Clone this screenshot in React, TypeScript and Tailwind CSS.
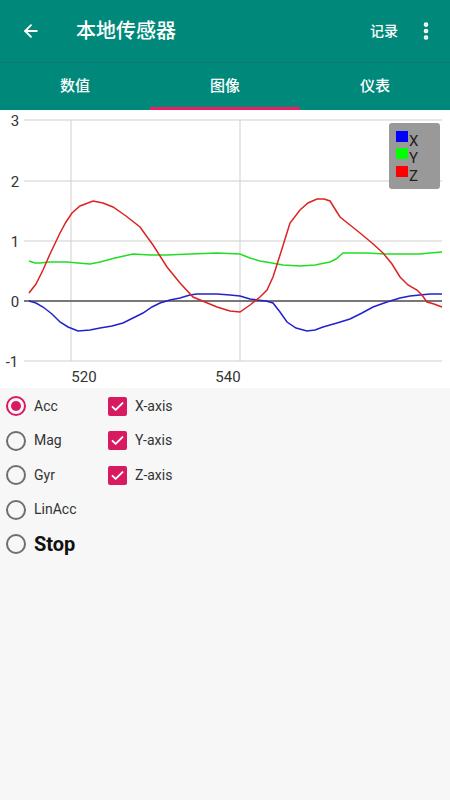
import { ArrowLeft, MoreVertical } from "lucide-react";

const font = { fontFamily: "Roboto, 'Noto Sans CJK SC', sans-serif" };

// chart area points (px inside a 450x278 box)
const shift = (pts: number[][]) =>
  pts.map(([x, y]) => `${x},${y - 110}`).join(" ");

const zLine = shift([
  [29, 293], [36, 284], [43, 270], [50, 254], [60, 233], [66, 222], [72, 213], [80, 206], [93, 201],
  [103, 203], [113, 207], [126, 216], [140, 227], [153, 245], [167, 267], [180, 283], [193, 297],
  [205, 302], [217, 307], [230, 311], [240, 312], [250, 305], [260, 297], [267, 290], [273, 277],
  [281, 252], [290, 223], [300, 210], [308, 203], [317, 199], [324, 199], [330, 201], [335, 209],
  [340, 217], [350, 225], [360, 233], [372, 243], [383, 253], [392, 264], [400, 277], [408, 285],
  [417, 290], [422, 295], [427, 302], [434, 304], [442, 307],
]);

const yLine = shift([
  [29, 261], [35, 263], [40, 263], [50, 262], [67, 262], [78, 263], [90, 264], [100, 262],
  [115, 258], [133, 254], [150, 255], [167, 255], [190, 254], [217, 253], [240, 254], [250, 258],
  [260, 261], [272, 263], [283, 265], [300, 266], [315, 265], [330, 262], [336, 259], [343, 253],
  [355, 253], [367, 253], [385, 254], [400, 254], [420, 254], [430, 253], [442, 252],
]);

const xLine = shift([
  [29, 301], [36, 303], [43, 307], [52, 314], [60, 322], [68, 327], [78, 331], [90, 330],
  [100, 328], [112, 326], [123, 323], [133, 318], [143, 313], [152, 307], [160, 303], [170, 300],
  [180, 298], [190, 295], [197, 294], [207, 294], [217, 294], [230, 295], [240, 296], [250, 299],
  [257, 300], [266, 301], [273, 303], [280, 312], [287, 322], [296, 328], [307, 331], [315, 330],
  [323, 327], [337, 323], [350, 319], [362, 313], [373, 307], [387, 302], [400, 298], [410, 296],
  [420, 295], [430, 294], [442, 294],
]);

function Chart() {
  const rows = [
    { v: "3", y: 10 },
    { v: "2", y: 71 },
    { v: "1", y: 131 },
    { v: "-1", y: 251 },
  ];
  return (
    <svg width="450" height="278" viewBox="0 0 450 278" className="block">
      <rect width="450" height="278" fill="#ffffff" />
      {rows.map((r) => (
        <line key={r.v} x1="24" x2="442" y1={r.y} y2={r.y} stroke="#cfcfcf" strokeWidth="1" />
      ))}
      <line x1="71" x2="71" y1="10" y2="251" stroke="#cfcfcf" strokeWidth="1" />
      <line x1="240" x2="240" y1="10" y2="251" stroke="#cfcfcf" strokeWidth="1" />
      <line x1="24" x2="442" y1="191" y2="191" stroke="#777777" strokeWidth="2" />
      <g fontFamily="Roboto, sans-serif" fontSize="15" fill="#333333">
        <text x="15" y="16" textAnchor="middle">3</text>
        <text x="15" y="77" textAnchor="middle">2</text>
        <text x="15" y="137" textAnchor="middle">1</text>
        <text x="15" y="197" textAnchor="middle">0</text>
        <text x="12" y="257" textAnchor="middle">-1</text>
        <text x="84" y="272" textAnchor="middle">520</text>
        <text x="228" y="272" textAnchor="middle">540</text>
      </g>
      <polyline points={yLine} fill="none" stroke="#22dd22" strokeWidth="1.5" />
      <polyline points={xLine} fill="none" stroke="#2222cc" strokeWidth="1.5" />
      <polyline points={zLine} fill="none" stroke="#dd2222" strokeWidth="1.5" />
      <rect x="389" y="13" width="51" height="66" rx="3" fill="#999999" />
      <rect x="396" y="21" width="12" height="11" fill="#0000ff" />
      <rect x="396" y="38" width="12" height="11" fill="#00ff00" />
      <rect x="396" y="56" width="12" height="11" fill="#ff0000" />
      <g fontFamily="Roboto, sans-serif" fontSize="15" fill="#222222">
        <text x="409" y="36">X</text>
        <text x="409" y="53">Y</text>
        <text x="409" y="71">Z</text>
      </g>
    </svg>
  );
}

function Radio({ checked, label, bold }: { checked?: boolean; label: string; bold?: boolean }) {
  return (
    <div className="flex h-[34.5px] items-center">
      <div
        className={`ml-[6px] flex h-5 w-5 items-center justify-center rounded-full border-2 ${
          checked ? "border-[#d81b60]" : "border-[#6f6f6f]"
        }`}
      >
        {checked && <div className="h-[10px] w-[10px] rounded-full bg-[#d81b60]" />}
      </div>
      <span
        className={
          bold
            ? "ml-[8px] text-[20px] font-bold text-[#111]"
            : "ml-[8px] text-[14px] text-[#333]"
        }
      >
        {label}
      </span>
    </div>
  );
}

function Check({ label }: { label: string }) {
  return (
    <div className="flex h-[34.5px] items-center">
      <div className="flex h-[19px] w-[19px] items-center justify-center rounded-[2px] bg-[#d81b60]">
        <svg width="15" height="15" viewBox="0 0 24 24" fill="none" stroke="#ffffff" strokeWidth="3" strokeLinecap="round" strokeLinejoin="round">
          <path d="M4 12.5l5 5L20 6.5" />
        </svg>
      </div>
      <span className="ml-[8px] text-[14px] text-[#333]">{label}</span>
    </div>
  );
}

export default function App() {
  return (
    <div className="flex h-[800px] w-[450px] flex-col overflow-hidden bg-[#f7f7f7]" style={font}>
      <div className="flex h-[62px] items-center bg-[#00897b] text-white">
        <ArrowLeft className="ml-[21px] h-[20px] w-[20px]" strokeWidth={2.2} />
        <span className="ml-[35px] text-[20px] font-medium">本地传感器</span>
        <span className="ml-auto text-[14px] font-medium">记录</span>
        <MoreVertical className="ml-[17px] mr-[13px] h-[22px] w-[22px]" strokeWidth={3} />
      </div>
      <div className="relative flex h-[48px] border-t border-[#0a7d71] bg-[#00897b] text-[15px] font-medium text-white">
        <div className="flex flex-1 items-center justify-center">数值</div>
        <div className="flex flex-1 items-center justify-center">图像</div>
        <div className="flex flex-1 items-center justify-center">仪表</div>
        <div className="absolute bottom-0 left-[150px] h-[3px] w-[150px] bg-[#e91e63]" />
      </div>
      <Chart />
      <div className="flex pt-[1px]">
        <div className="w-[108px]">
          <Radio checked label="Acc" />
          <Radio label="Mag" />
          <Radio label="Gyr" />
          <Radio label="LinAcc" />
          <Radio label="Stop" bold />
        </div>
        <div>
          <Check label="X-axis" />
          <Check label="Y-axis" />
          <Check label="Z-axis" />
        </div>
      </div>
    </div>
  );
}
